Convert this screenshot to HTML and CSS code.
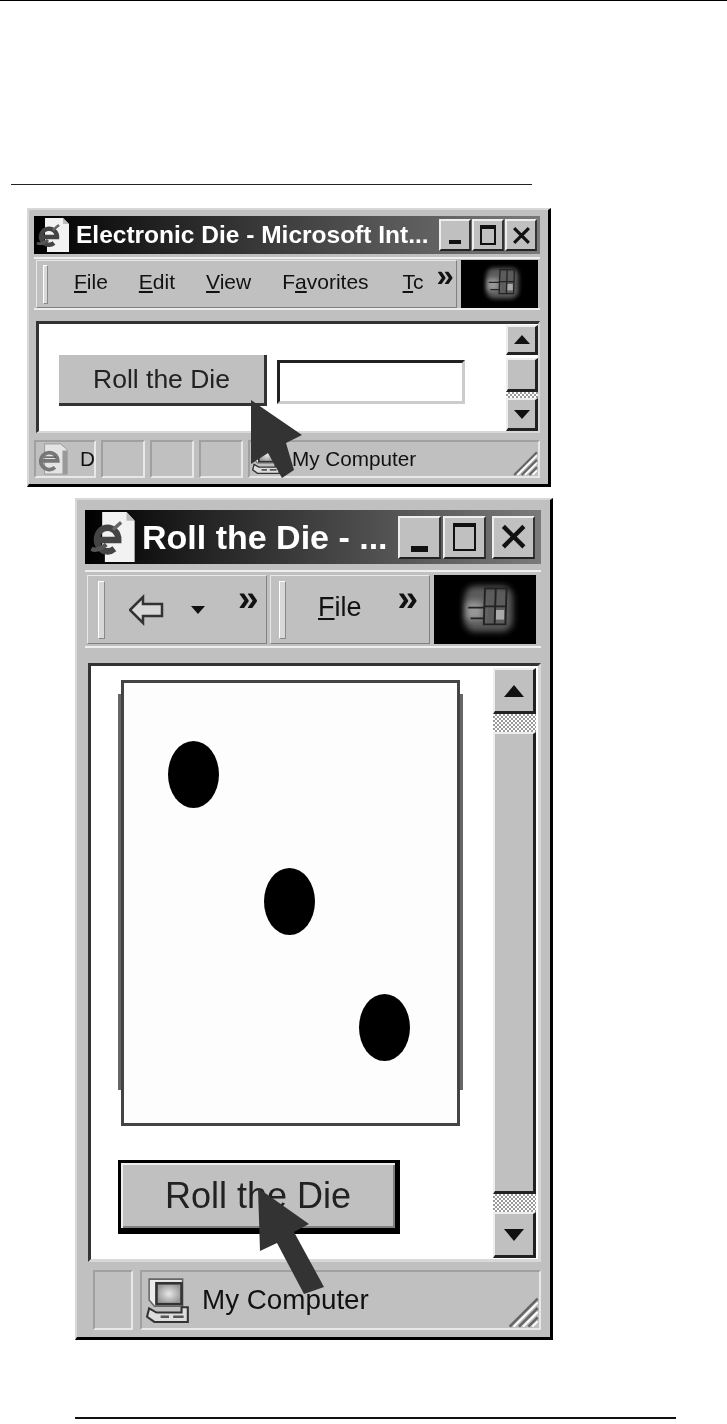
FILE: index.html
```html
<!DOCTYPE html>
<html lang="en">
<head>
    <meta charset="UTF-8">
    <title>Electronic Die</title>
    <link rel="stylesheet" href="styles.css">
</head>
<body>
    <div class="top-rule"></div>
    <div class="section-rule"></div>

    <!-- small window -->
    <div class="win win-small">
        <div class="titlebar">
            <svg class="doc-icon" viewBox="0 0 34 34" preserveAspectRatio="none"><use href="#ie-title"/></svg>
            <span class="title-text">Electronic Die - Microsoft Int...</span>
            <div class="title-btns">
                <div class="tbtn"><i class="min-bar"></i></div>
                <div class="tbtn"><i class="max-box"></i></div>
                <div class="tbtn tbtn-close"><svg viewBox="0 0 20 20"><path d="M3 3L17 17M17 3L3 17"/></svg></div>
            </div>
        </div>
        <div class="toolbar">
            <div class="band">
                <i class="grip"></i>
                <span class="menu"><u>F</u>ile</span>
                <span class="menu"><u>E</u>dit</span>
                <span class="menu"><u>V</u>iew</span>
                <span class="menu">F<u>a</u>vorites</span>
                <span class="menu menu-cut"><u>T</u>c</span>
                <b class="more">»</b>
            </div>
            <div class="logo"><svg viewBox="0 0 60 50"><use href="#flag"/></svg></div>
        </div>
        <div class="content">
            <div class="main">
                <button class="roll">Roll the Die</button>
                <div class="text-box"></div>
            </div>
            <div class="scroll">
                <div class="sbtn"><i class="tri-up"></i></div>
                <div class="thumb"></div>
                <div class="dither"></div>
                <div class="sbtn"><i class="tri-down"></i></div>
            </div>
        </div>
        <div class="status">
            <div class="cell cell-ie">
                <svg class="ie-icon" viewBox="0 0 34 34"><use href="#ie-status"/></svg>
                <span>D</span>
            </div>
            <div class="cell cell-blank"></div>
            <div class="cell cell-blank"></div>
            <div class="cell cell-blank"></div>
            <div class="cell cell-zone">
                <svg class="pc-icon" viewBox="0 0 44 44"><use href="#pc"/></svg>
                <span>My Computer</span>
                <svg class="resize" viewBox="0 0 24 24"><use href="#grip-lines"/></svg>
            </div>
        </div>
        <svg class="pointer pointer-small" viewBox="0 0 56 80"><path d="M3 1L54 36L38 44L46 71L34 79L20 54L3 65Z"/></svg>
    </div>

    <!-- big window -->
    <div class="win win-big">
        <div class="titlebar">
            <svg class="doc-icon" viewBox="0 0 34 34" preserveAspectRatio="none"><use href="#ie-title"/></svg>
            <span class="title-text">Roll the Die - ...</span>
            <div class="title-btns">
                <div class="tbtn"><i class="min-bar"></i></div>
                <div class="tbtn"><i class="max-box"></i></div>
                <div class="tbtn tbtn-close"><svg viewBox="0 0 20 20"><path d="M3 3L17 17M17 3L3 17"/></svg></div>
            </div>
        </div>
        <div class="toolbar">
            <div class="band band-back">
                <i class="grip"></i>
                <svg class="back" viewBox="0 0 36 32"><path d="M1 16L14 3V10H33V22H14V29Z"/></svg>
                <i class="caret"></i>
                <b class="more">»</b>
            </div>
            <div class="band band-file">
                <i class="grip"></i>
                <span class="menu"><u>F</u>ile</span>
                <b class="more">»</b>
            </div>
            <div class="logo"><svg viewBox="0 0 60 50"><use href="#flag"/></svg></div>
        </div>
        <div class="content">
            <div class="main">
                <div class="die">
                    <i class="pip pip-1"></i>
                    <i class="pip pip-2"></i>
                    <i class="pip pip-3"></i>
                </div>
                <button class="roll">Roll the Die</button>
            </div>
            <div class="scroll">
                <div class="sbtn"><i class="tri-up"></i></div>
                <div class="dither"></div>
                <div class="thumb"></div>
                <div class="dither"></div>
                <div class="sbtn"><i class="tri-down"></i></div>
            </div>
        </div>
        <div class="status">
            <div class="cell cell-blank"></div>
            <div class="cell cell-zone">
                <svg class="pc-icon" viewBox="0 0 44 44"><use href="#pc"/></svg>
                <span>My Computer</span>
                <svg class="resize" viewBox="0 0 24 24"><use href="#grip-lines"/></svg>
            </div>
        </div>
        <svg class="pointer pointer-big" viewBox="0 0 68 108"><path d="M1 1L52 37L37 45L67 100L47 107L20 56L3 64Z"/></svg>
    </div>

    <div class="foot-rule"></div>

    <!-- shared icons -->
    <svg class="defs" width="0" height="0">
        <defs>
            <filter id="soft" x="-30%" y="-30%" width="160%" height="160%">
                <feGaussianBlur stdDeviation="2.5"/>
            </filter>
            <radialGradient id="screen">
                <stop offset="0" stop-color="#e8e8e8"/>
                <stop offset="1" stop-color="#999"/>
            </radialGradient>
            <g id="ie-title">
                <path d="M9 0H27L33 6V34H11V28H9Z" fill="#f2f2f2"/>
                <path d="M27 0V6H33" fill="#bbb"/>
                <path d="M6 19H21A8 8 0 1 0 18 25" fill="none" stroke="#444" stroke-width="4.5"/>
                <path d="M1 25C5 27 10 24 12 22" fill="none" stroke="#555" stroke-width="3"/>
                <path d="M17 12L23 7" stroke="#666" stroke-width="2.5"/>
            </g>
            <g id="ie-status">
                <path d="M7 1H24L31 7V33H7Z" fill="#e4e4e4" stroke="#999"/>
                <path d="M26 8H31V33H26Z" fill="#999"/>
                <path d="M5 19H21A9 9 0 1 0 18 26" fill="none" stroke="#777" stroke-width="4"/>
                <path d="M7 15H19" stroke="#555" stroke-width="1.5"/>
            </g>
            <g id="flag">
                <rect x="13" y="5" width="40" height="38" rx="9" fill="#5c5c5c" filter="url(#soft)"/>
                <rect x="14" y="18" width="14" height="15" fill="#999" filter="url(#soft)"/>
                <rect x="39" y="25" width="7" height="8" fill="#aaa"/>
                <path d="M30 7H48L47 37H29ZM30 22H47M39 7L38 37M16 23H29M18 32H29" fill="none" stroke="#222" stroke-width="1.6"/>
            </g>
            <g id="pc">
                <path d="M3 2H35V28H8L3 22Z" fill="#ececec" stroke="#666" stroke-width="1.5"/>
                <rect x="10" y="6" width="24" height="20" fill="url(#screen)" stroke="#333" stroke-width="2.5"/>
                <path d="M3 30L10 34H34V29H40V43H8L1 38Z" fill="#ddd" stroke="#333" stroke-width="2"/>
                <path d="M14 38H22M26 38H36" stroke="#555" stroke-width="2.5"/>
            </g>
            <g id="grip-lines">
                <path d="M23 2L2 23M23 9L9 23M23 16L16 23" stroke="#666" stroke-width="2"/>
                <path d="M23 5L5 23M23 12L12 23M23 19L19 23" stroke="#fff" stroke-width="1.5"/>
            </g>
        </defs>
    </svg>
</body>
</html>
```

FILE: styles.css
```css
* {
    box-sizing: border-box;
}

body {
    margin: 0;
    background: #fff;
    font-family: "Liberation Sans", Arial, sans-serif;
    color: #111;
}

.top-rule {
    height: 1px;
    background: #000;
}
.section-rule {
    height: 1px;
    width: 521px;
    margin: 183px 0 0 11px;
    background: #222;
}
.foot-rule {
    height: 2px;
    width: 601px;
    margin: 77px 0 0 75px;
    background: #111;
}
.defs {
    position: absolute;
}

/* window frame */
.win {
    position: relative;
    display: flex;
    flex-direction: column;
    background: #c0c0c0;
    border-top: 2px solid #d8d8d8;
    border-left: 2px solid #d8d8d8;
    border-right: 3px solid #000;
    border-bottom: 3px solid #000;
    filter: blur(0.6px);
}
.win-small {
    width: 524px;
    height: 279px;
    margin: 23px 0 0 27px;
    padding: 6px 8px 6px 5px;
}
.win-big {
    width: 478px;
    height: 842px;
    margin: 11px 0 0 75px;
    padding: 10px 9px 7px 8px;
}

/* title bar */
.titlebar {
    display: flex;
    align-items: center;
    background: linear-gradient(90deg, #000, #222 25%, #7a7a7a);
    color: #fff;
    font-weight: bold;
    white-space: nowrap;
}
.win-small .titlebar {
    height: 38px;
    padding-left: 2px;
    font-size: 24.5px;
}
.win-big .titlebar {
    height: 54px;
    padding-left: 5px;
    font-size: 34px;
}
.doc-icon {
    flex: none;
}
.win-small .doc-icon {
    width: 34px;
    height: 34px;
    margin-right: 6px;
}
.win-big .doc-icon {
    width: 46px;
    height: 50px;
    margin-right: 6px;
}
.title-text {
    flex: 1;
}
.title-btns {
    display: flex;
}
.win-small .title-btns {
    gap: 1px;
    padding-right: 3px;
}
.win-big .title-btns {
    gap: 2px;
    padding-right: 6px;
}
.tbtn {
    display: flex;
    align-items: center;
    justify-content: center;
    background: #c0c0c0;
    border: 2px solid;
    border-color: #eee #333 #222 #eee;
}
.win-small .tbtn {
    width: 32px;
    height: 32px;
}
.win-big .tbtn {
    width: 43px;
    height: 43px;
}
.win-big .tbtn-close {
    margin-left: 4px;
}
.tbtn svg {
    width: 75%;
    height: 75%;
    fill: none;
    stroke: #111;
    stroke-width: 3;
}
.min-bar {
    display: block;
    align-self: flex-end;
    width: 45%;
    height: 4px;
    margin-bottom: 5px;
    background: #111;
}
.win-big .min-bar {
    height: 6px;
}
.max-box {
    display: block;
    width: 60%;
    height: 70%;
    border: 2px solid #111;
    border-top-width: 4px;
}

/* toolbar */
.toolbar {
    display: flex;
    background: #c0c0c0;
    border-top: 2px solid #eee;
    border-bottom: 2px solid #eee;
}
.win-small .toolbar {
    height: 53px;
    margin-top: 3px;
    padding: 1px 2px 0 2px;
    font-size: 21px;
}
.win-big .toolbar {
    height: 78px;
    margin-top: 6px;
    padding: 3px 5px 2px 2px;
    font-size: 27px;
}
.band {
    position: relative;
    display: flex;
    align-items: center;
    border: 1px solid;
    border-color: #e8e8e8 #808080 #808080 #e8e8e8;
}
.win-small .band {
    width: 421px;
    margin-right: 4px;
    padding-left: 6px;
}
.win-big .band-back {
    width: 180px;
    padding-left: 10px;
}
.win-big .band-file {
    width: 160px;
    margin: 0 4px 0 3px;
    padding-left: 8px;
}
.grip {
    flex: none;
    display: block;
    width: 5px;
    background: #d8d8d8;
    border: 1px solid;
    border-color: #fff #888 #888 #fff;
}
.win-small .grip {
    height: 39px;
    margin-right: 26px;
}
.win-big .grip {
    width: 7px;
    height: 58px;
}
.band-back .grip {
    margin-right: 24px;
}
.band-file .grip {
    margin-right: 32px;
}
.menu {
    padding-bottom: 4px;
}
.win-small .menu {
    margin-right: 31px;
    padding-bottom: 5px;
}
.win-small .menu-cut {
    margin: 0 13px 0 3px;
    white-space: nowrap;
}
.more {
    line-height: 1;
    align-self: flex-start;
}
.win-small .more {
    margin-top: -1px;
    font-size: 31px;
}
.win-big .more {
    margin-top: 4px;
    font-size: 37px;
}
.band-back .more {
    margin-left: 33px;
}
.band-file .more {
    margin-left: 36px;
}
.back {
    width: 36px;
    height: 32px;
    fill: #d8d8d8;
    stroke: #333;
    stroke-width: 2.5;
}
.caret {
    width: 0;
    height: 0;
    margin-left: 26px;
    border: 7px solid transparent;
    border-top: 8px solid #111;
    border-bottom: 0;
}
.logo {
    flex: 1;
    display: flex;
    align-items: center;
    justify-content: center;
    background: #000;
}
.win-small .logo svg {
    width: 50px;
    height: 40px;
}
.win-big .logo svg {
    width: 72px;
    height: 60px;
}

/* page area */
.content {
    display: flex;
    background: #fff;
    border: 3px solid;
    border-color: #333 #d8d8d8 #d8d8d8 #333;
}
.win-small .content {
    height: 112px;
    margin-top: 11px;
    margin-left: 2px;
    border-right-width: 2px;
    border-bottom-width: 2px;
}
.win-big .content {
    height: 599px;
    margin-top: 15px;
    margin-left: 3px;
}
.main {
    flex: 1;
}
.win-small .main {
    display: flex;
    padding: 31px 0 0 20px;
    gap: 10px;
}
.win-big .main {
    padding: 14px 0 0 30px;
}
.roll {
    display: block;
    padding: 0;
    background: #c0c0c0;
    color: #222;
    font-family: inherit;
}
.win-small .roll {
    width: 208px;
    height: 51px;
    border: 0;
    border-right: 3px solid #333;
    border-bottom: 3px solid #333;
    font-size: 26.5px;
}
.win-big .roll {
    width: 282px;
    height: 74px;
    margin: 34px 0 0 -3px;
    border: 3px solid #000;
    border-right-width: 5px;
    border-bottom-width: 6px;
    box-shadow: inset 2px 2px 0 #eee, inset -2px -2px 0 #808080;
    font-size: 36px;
}
.text-box {
    width: 188px;
    height: 44px;
    margin-top: 5px;
    background: #fff;
    border: 3px solid;
    border-color: #222 #ccc #ccc #222;
}

/* die picture */
.die {
    position: relative;
    display: grid;
    grid-template-columns: repeat(3, 95.5px);
    grid-template-rows: repeat(3, 126.5px);
    place-content: center;
    place-items: center;
    width: 339px;
    height: 446px;
    padding: 0 3px 4px 0;
    background: #fdfdfd;
    border: 3px solid #444;
}
.die::before,
.die::after {
    content: "";
    position: absolute;
    top: 11px;
    bottom: 33px;
    width: 3px;
    background: #666;
}
.die::before {
    left: -6px;
}
.die::after {
    right: -6px;
}
.pip {
    display: block;
    width: 51px;
    height: 67px;
    border-radius: 50%;
    background: #000;
}
.pip-1 {
    grid-column: 1;
    grid-row: 1;
}
.pip-2 {
    grid-column: 2;
    grid-row: 2;
}
.pip-3 {
    grid-column: 3;
    grid-row: 3;
}

/* scrollbar */
.scroll {
    flex: none;
    display: flex;
    flex-direction: column;
}
.win-small .scroll {
    width: 32px;
    margin-top: 1px;
}
.win-big .scroll {
    width: 43px;
    margin: 2px 2px 1px 0;
}
.sbtn,
.thumb {
    background: #c0c0c0;
    border: 2px solid;
    border-color: #eee #222 #222 #eee;
    border-right-width: 3px;
    border-bottom-width: 3px;
}
.sbtn {
    display: flex;
    align-items: center;
    justify-content: center;
    flex: none;
}
.win-small .sbtn {
    height: 30px;
}
.win-small .sbtn:last-child {
    height: 33px;
}
.win-big .sbtn {
    height: 46px;
}
.win-small .thumb {
    height: 34px;
    margin-top: 3px;
}
.win-big .thumb {
    flex: 1;
}
.dither {
    flex: none;
    background: repeating-conic-gradient(#999 0 25%, #fff 0 50%) 0 0 / 4px 4px;
}
.win-small .dither {
    height: 6px;
}
.win-big .dither {
    height: 18px;
}
.tri-up,
.tri-down {
    width: 0;
    height: 0;
    border-left: 8px solid transparent;
    border-right: 8px solid transparent;
}
.tri-up {
    border-bottom: 9px solid #111;
}
.tri-down {
    border-top: 9px solid #111;
}
.win-big .tri-up,
.win-big .tri-down {
    border-left-width: 10px;
    border-right-width: 10px;
    border-top-width: 12px;
}
.win-big .tri-up {
    border-top-width: 0;
    border-bottom-width: 12px;
}

/* status bar */
.status {
    display: flex;
}
.win-small .status {
    height: 38px;
    margin-top: 7px;
    gap: 5px;
    font-size: 20.7px;
}
.win-big .status {
    height: 60px;
    margin-top: 8px;
    gap: 7px;
    margin-left: 8px;
    font-size: 27.8px;
}
.cell {
    display: flex;
    align-items: center;
    border: 2px solid;
    border-color: #a0a0a0 #e8e8e8 #e8e8e8 #a0a0a0;
}
.cell-ie {
    width: 62px;
    padding-left: 2px;
    gap: 10px;
}
.ie-icon {
    flex: none;
    width: 32px;
    height: 34px;
}
.win-small .cell-blank {
    width: 44px;
}
.win-big .cell-blank {
    width: 40px;
}
.cell-zone {
    flex: 1;
    position: relative;
}
.win-small .cell-zone {
    padding-left: 2px;
    gap: 10px;
}
.win-big .cell-zone {
    padding-left: 4px;
    gap: 10px;
}
.win-small .pc-icon {
    width: 30px;
    height: 30px;
}
.win-big .pc-icon {
    width: 46px;
    height: 46px;
}
.resize {
    position: absolute;
    right: 0;
    bottom: 0;
}
.win-small .resize {
    width: 26px;
    height: 26px;
}
.win-big .resize {
    width: 32px;
    height: 32px;
}

/* the big arrows drawn over the screenshots */
.pointer {
    position: absolute;
    fill: #333;
}
.pointer-small {
    left: 219px;
    top: 189px;
    width: 56px;
    height: 80px;
}
.pointer-big {
    left: 180px;
    top: 687px;
    width: 68px;
    height: 108px;
}
```
